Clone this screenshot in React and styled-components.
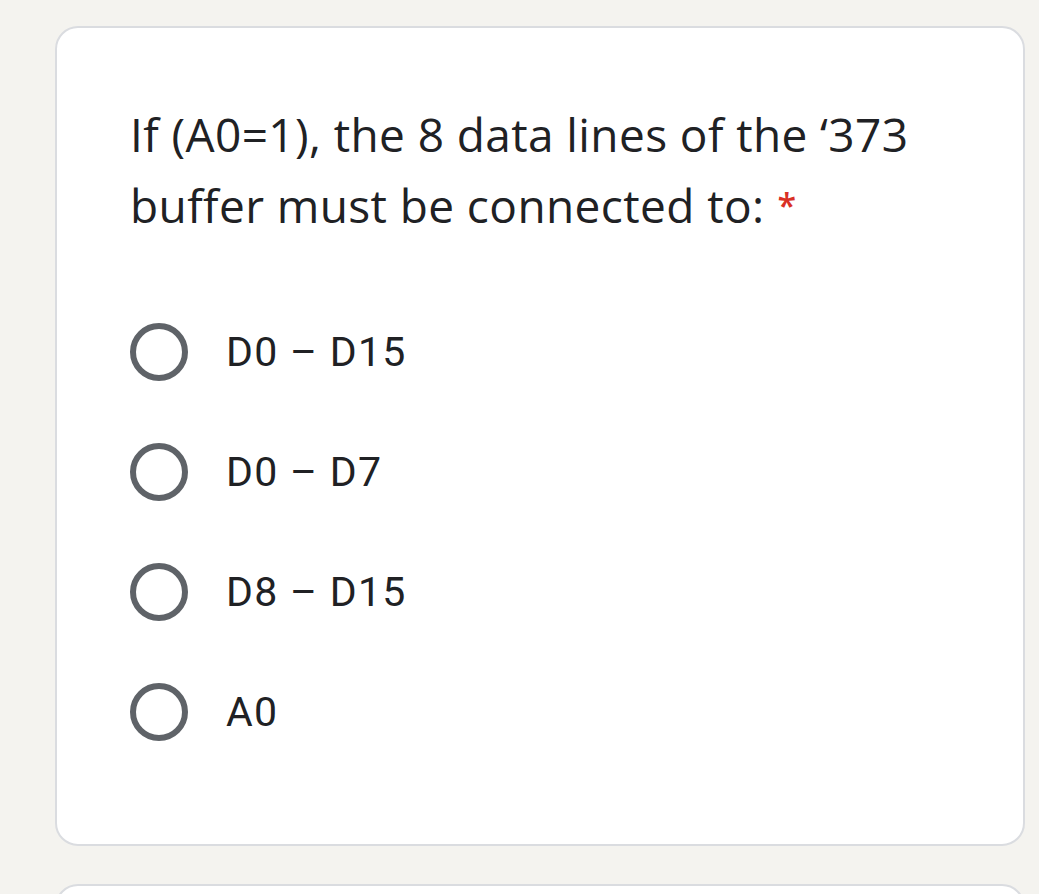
import React from "react";
import styled, { createGlobalStyle } from "styled-components";

const GlobalStyle = createGlobalStyle`
  html, body {
    margin: 0;
    padding: 0;
    background-color: #f4f3ef;
  }
  * {
    box-sizing: border-box;
  }
`;

const options = ["D0 – D15", "D0 – D7", "D8 – D15", "A0"];

const App = () => {
    return (
        <>
            <GlobalStyle/>
            <Page>
                <Card>
                    <Title>
                        If (A0=1), the 8 data lines of the ‘373 buffer must be connected to:
                        <Required>*</Required>
                    </Title>
                    <OptionList>
                        {options.map(option => (
                            <Option key={option}>
                                <Radio/>
                                <OptionLabel>{option}</OptionLabel>
                            </Option>
                        ))}
                    </OptionList>
                </Card>
                <Card $stub/>
            </Page>
        </>
    );
}

const Page = styled.div`
  padding: 26px 14px 0 55px;
  display: flex;
  flex-direction: column;
  gap: 38px;
  height: 894px;
  overflow: hidden;
`;

const Card = styled.div`
  width: 970px;
  flex-shrink: 0;
  height: ${props => props.$stub ? "200px" : "820px"};
  background-color: #ffffff;
  border: 2px solid #dadce0;
  border-radius: 23px;
  padding: 71px 70px 0 73px;
`;

const Title = styled.div`
  font-family: "Open Sans", sans-serif;
  font-size: 46px;
  line-height: 71px;
  letter-spacing: 0.4px;
  color: #202124;
  width: 800px;
`;

const Required = styled.span`
  color: #d93025;
  padding-left: 13px;
  font-size: 34px;
  font-weight: 600;
  line-height: 1;
  vertical-align: 5px;
`;

const OptionList = styled.div`
  display: flex;
  flex-direction: column;
  gap: 62px;
  margin-top: 82px;
`;

const Option = styled.div`
  display: flex;
  align-items: center;
  height: 58px;
`;

const Radio = styled.div`
  width: 58px;
  height: 58px;
  border-radius: 50%;
  border: 6px solid #5f6368;
  flex-shrink: 0;
`;

const OptionLabel = styled.span`
  font-family: Roboto, sans-serif;
  font-size: 41px;
  letter-spacing: 1.3px;
  color: #202124;
  margin-left: 38px;
`;

export default App;
